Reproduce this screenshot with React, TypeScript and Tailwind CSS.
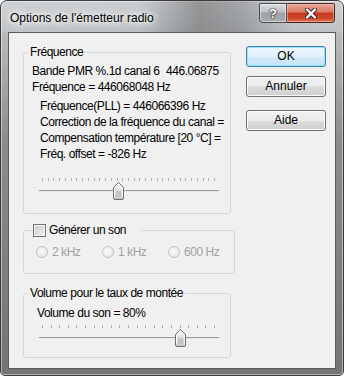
import React from 'react'

// Win7 style trackbar: ticks, groove and pointed thumb
function Slider({ ticks, pos }: { ticks: number; pos: number }) {
  const span = 172
  const thumbX = 3 + pos * span
  return (
    <svg width="180" height="22" viewBox="0 0 180 22" className="block">
      <defs>
        <linearGradient id={`th${ticks}`} x1="0" y1="0" x2="0" y2="1">
          <stop offset="0" stopColor="#f6f6f6" />
          <stop offset="0.45" stopColor="#e4e4e4" />
          <stop offset="1" stopColor="#c9c9c9" />
        </linearGradient>
      </defs>
      {Array.from({ length: ticks }).map((_, i) => {
        const x = Math.round(3 + (i * span) / (ticks - 1)) + 0.5
        return <line key={i} x1={x} x2={x} y1="0" y2="3" stroke="#b0b0b0" strokeWidth="1" />
      })}
      <line x1="0" x2="180" y1="12.5" y2="12.5" stroke="#9c9c9c" />
      <line x1="0" x2="180" y1="13.5" y2="13.5" stroke="#e6e6e6" />
      <g transform={`translate(${Math.round(thumbX) - 5},4)`}>
        <path d="M0.5 16 V5.5 L5.5 0.5 L10.5 5.5 V16 Q10.5 17.5 9 17.5 H2 Q0.5 17.5 0.5 16 Z" fill={`url(#th${ticks})`} stroke="#6f6f6f" />
        <path d="M1.5 15.5 V6 L5.5 2 L9.5 6 V15.5" fill="none" stroke="#ffffff" strokeOpacity="0.8" />
        <rect x="3" y="9" width="5" height="6" fill="#c4c4c4" />
      </g>
    </svg>
  )
}

function Radio({ label }: { label: string }) {
  return (
    <div className="w-[66px] flex items-center">
      <span className="w-[12px] h-[12px] rounded-full border border-[#c2c2c2] bg-[radial-gradient(circle_at_40%_40%,#fafafa,#e2e2e2)]" />
      <span className="ml-[4px] text-[#a0a0a0]">{label}</span>
    </div>
  )
}

function Button({ label, primary }: { label: string; primary?: boolean }) {
  return (
    <button
      className={`w-[80px] h-[21px] rounded-[3px] border leading-[19px] text-center ${
        primary
          ? 'border-[#3c7fb1] shadow-[inset_0_0_0_1px_#9fdcf6] bg-[linear-gradient(to_bottom,#edf7fd_0%,#e2f2fb_50%,#d1ebf9_50%,#c3e4f6_100%)]'
          : 'border-[#707070] shadow-[inset_0_0_0_1px_#fbfbfb] bg-[linear-gradient(to_bottom,#f2f2f2_0%,#ebebeb_50%,#dddddd_50%,#cfcfcf_100%)]'
      }`}
    >
      {label}
    </button>
  )
}

export default function App() {
  return (
    <div className="w-[346px] h-[378px] bg-white text-black [font-family:'Liberation_Sans',Arial,sans-serif]">
      <div className="w-[344px] h-[376px] flex flex-col border border-[#3b3b3b] rounded-t-[7px] rounded-b-[5px] overflow-hidden shadow-[inset_0_0_0_1px_rgba(255,255,255,0.45)] bg-[linear-gradient(to_bottom,#c9cccf_0px,#b9bcbf_32px,#8a8c8e_140px,#727476_100%)]">
        {/* title bar */}
        <div className="h-[31px] flex items-start bg-[linear-gradient(to_right,rgba(255,255,255,0.12)_0%,rgba(255,255,255,0.05)_40%,rgba(50,50,50,0.35)_58%,rgba(50,50,50,0.25)_70%,rgba(255,255,255,0.05)_85%,rgba(255,255,255,0.1)_100%)]">
          <span className="pl-[9px] pt-[9px] text-[12px] leading-[16px] [text-shadow:0_0_5px_#fff,0_0_9px_#fff,0_0_12px_#fff]">
            Options de l&apos;émetteur radio
          </span>
          <div className="ml-auto mr-[8px] mt-[2px] flex">
            <div className="w-[28px] h-[20px] flex items-center justify-center rounded-bl-[4px] rounded-tl-[2px] border border-[#4a4d50] shadow-[inset_0_0_0_1px_rgba(255,255,255,0.45)] bg-[linear-gradient(to_bottom,#dcdfe1_0%,#bcc0c3_45%,#9ca1a5_50%,#a8adb1_100%)]">
              <span className="text-white text-[13px] font-bold leading-none [text-shadow:0_0_1px_#222,0_0_1px_#222,0_0_2px_#222]">?</span>
            </div>
            <div className="w-[48px] h-[20px] flex items-center justify-center rounded-br-[4px] rounded-tr-[2px] border border-l-0 border-[#4a2520] shadow-[inset_0_0_0_1px_rgba(255,210,200,0.45)] bg-[linear-gradient(to_bottom,#e9a79a_0%,#d97a66_45%,#c7391f_50%,#cf4529_80%,#e07b56_100%)]">
              <svg width="12" height="11" viewBox="0 0 12 11">
                <path d="M2 1.5 L10 9.5 M10 1.5 L2 9.5" stroke="#3a2a28" strokeWidth="4.2" strokeLinecap="round" />
                <path d="M2 1.5 L10 9.5 M10 1.5 L2 9.5" stroke="#ffffff" strokeWidth="2.4" strokeLinecap="round" />
              </svg>
            </div>
          </div>
        </div>

        {/* client area */}
        <div className="flex-1 px-[7px] pb-[6px] flex">
          <div className="flex-1 flex bg-[#f0f0f0] border border-[#5c5c5c] text-[12px] leading-[16px] tracking-[-0.45px]">
            <div className="pl-[14px] pt-[11px] flex flex-col">
              <fieldset className="w-[208px] border border-[#d3d8dc] rounded-[3px] px-0 pb-[13px]">
                <legend className="ml-[4px] px-[2px] leading-[16px]">Fréquence</legend>
                <div className="pl-[8px] pt-[3px]">
                  <div className="grid grid-cols-[134px_auto]">
                    <span>Bande PMR %.1d canal 6</span>
                    <span>446.06875</span>
                  </div>
                  <div>Fréquence = 446068048 Hz</div>
                  <div className="ml-[8px] mt-[3px]">
                    <div>Fréquence(PLL) = 446066396 Hz</div>
                    <div>Correction de la fréquence du canal =</div>
                    <div>Compensation température [20 °C] =</div>
                    <div>Fréq. offset = -826 Hz</div>
                  </div>
                </div>
                <div className="ml-[15px] mt-[16px]">
                  <Slider ticks={31} pos={0.442} />
                </div>
              </fieldset>

              <fieldset className="mt-[8px] w-[208px] border border-[#d3d8dc] rounded-[3px] px-0 pb-[13px]">
                <legend className="ml-[9px] pr-[15px] h-[16px] flex items-center">
                  <span className="w-[13px] h-[13px] border border-[#737373] shadow-[inset_0_0_0_1px_#f4f4f4] bg-[linear-gradient(135deg,#cbcbcb,#f1f1f1)]" />
                  <span className="ml-[3px]">Générer un son</span>
                </legend>
                <div className="pt-[6px] pl-[12px] flex">
                  <Radio label="2 kHz" />
                  <Radio label="1 kHz" />
                  <Radio label="600 Hz" />
                </div>
              </fieldset>

              <fieldset className="mt-[11px] w-[208px] border border-[#d3d8dc] rounded-[3px] px-0 pb-[10px]">
                <legend className="ml-[4px] px-[2px] leading-[16px]">Volume pour le taux de montée</legend>
                <div className="pt-[4px] pl-[13px]">Volume du son = 80%</div>
                <div className="ml-[15px] mt-[4px]">
                  <Slider ticks={21} pos={0.8} />
                </div>
              </fieldset>
            </div>

            <div className="ml-[11px] pt-[13px] flex flex-col tracking-normal">
              <Button label="OK" primary />
              <div className="mt-[9px]">
                <Button label="Annuler" />
              </div>
              <div className="mt-[13px]">
                <Button label="Aide" />
              </div>
            </div>
          </div>
        </div>
      </div>
    </div>
  )
}
